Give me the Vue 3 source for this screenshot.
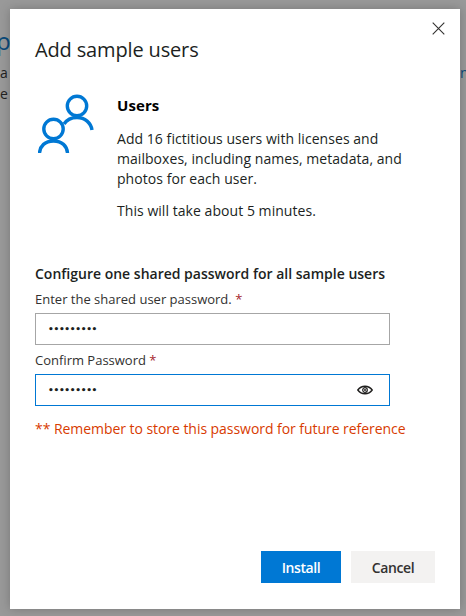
<script setup>
// Поля пароля
const mask = '•••••••••'
</script>

<template>
  <div class="page">
    <!-- Страница за затемнением -->
    <div class="behind">
      <div class="behind-title">p</div>
      <div class="behind-line">a</div>
      <div class="behind-line">e</div>
      <div class="behind-right">n</div>
    </div>

    <div class="dialog">
      <button class="close" aria-label="Close">
        <svg width="13" height="13" viewBox="0 0 13 13">
          <path d="M.7.7l11.6 11.6M12.3.7L.7 12.3" fill="none" stroke="#323130" stroke-width="1.1" />
        </svg>
      </button>

      <h1 class="title">Add sample users</h1>

      <div class="pack">
        <svg class="pack-icon" width="58" height="60" viewBox="0 0 58 60">
          <g fill="none" stroke="#0078d4" stroke-width="3.4">
            <circle cx="39" cy="13" r="9.700" />
            <path d="M26 31c3-4.500 7-6.500 13-6.500 8 0 14 5.500 15 12.500" />
            <circle cx="15.500" cy="36" r="9.700" />
            <path d="M1.500 60c.5-7 5.500-12 14-12s13.500 5 14 12" />
          </g>
        </svg>
        <div class="pack-text">
          <h2>Users</h2>
          <p>Add 16 fictitious users with licenses and mailboxes, including names, metadata, and photos for each user.</p>
          <p class="time">This will take about 5 minutes.</p>
        </div>
      </div>

      <h3 class="section">Configure one shared password for all sample users</h3>

      <label class="label">Enter the shared user password. <span class="star">*</span></label>
      <div class="field">{{ mask }}</div>

      <label class="label second">Confirm Password <span class="star">*</span></label>
      <div class="field focused">
        {{ mask }}
        <svg class="eye" width="16" height="12" viewBox="0 0 16 12">
          <path d="M.8 6C2.500 3.600 5 2.200 8 2.200s5.500 1.400 7.200 3.800C13.500 8.400 11 9.800 8 9.800S2.500 8.400.8 6z" fill="none" stroke="#201f1e" stroke-width="1.400" />
          <circle cx="8" cy="6" r="2.300" fill="none" stroke="#201f1e" stroke-width="1.200" />
          <circle cx="8" cy="6" r="1" fill="#201f1e" />
        </svg>
      </div>

      <p class="warning">** Remember to store this password for future reference</p>

      <div class="actions">
        <button class="btn primary">Install</button>
        <button class="btn">Cancel</button>
      </div>
    </div>
  </div>
</template>

<style>
html, body {
  margin: 0;
  background: #999;
}
</style>

<style scoped>
.page {
  position: relative;
  width: 466px;
  height: 616px;
  overflow: hidden;
  background: #999;
  font-family: "Open Sans", "Noto Sans", sans-serif;
  color: #201f1e;
}
.behind {
  position: absolute;
  inset: 0;
  color: #222;
  font-size: 14px;
}
.behind-title {
  position: absolute;
  left: -4px;
  top: 24px;
  font-size: 24px;
  color: #0a4a7a;
}
.behind-line {
  position: absolute;
  left: 0;
}
.behind-line:nth-child(2) { top: 63px; }
.behind-line:nth-child(3) { top: 84px; }
.behind-right {
  position: absolute;
  left: 460px;
  top: 63px;
  color: #0a4a7a;
}
.dialog {
  position: absolute;
  left: 10px;
  top: 9px;
  width: 450px;
  height: 600px;
  box-sizing: border-box;
  padding: 26px 25px 0;
  background: #fff;
  box-shadow: 0 0 10px rgba(0, 0, 0, 0.22);
  display: flex;
  flex-direction: column;
}
.close {
  position: absolute;
  right: 15px;
  top: 13px;
  width: 13px;
  height: 13px;
  padding: 0;
  border: 0;
  background: none;
  display: flex;
}
.title {
  margin: 0;
  font-size: 20px;
  font-weight: 400;
  line-height: 30px;
  letter-spacing: -0.15px;
}
.pack {
  display: flex;
  margin-top: 29px;
}
.pack-icon {
  flex: none;
  margin: -1px 21px 0 3px;
}
.pack-text h2 {
  margin: 0;
  font-size: 15px;
  font-weight: 700;
  line-height: 22px;
  color: #000;
  letter-spacing: 0.1px;
}
.pack-text p {
  margin: 13px 0 0;
  width: 295px;
  font-size: 14px;
  line-height: 20px;
  letter-spacing: 0.05px;
}
.pack-text .time {
  margin-top: 12px;
}
.section {
  margin: 43px 0 0;
  font-size: 14px;
  font-weight: 600;
  line-height: 20px;
}
.label {
  display: block;
  margin-top: 5px;
  font-size: 13px;
  line-height: 20px;
  color: #323130;
}
.label.second {
  margin-top: 5px;
}
.star {
  color: #a4262c;
}
.field {
  box-sizing: border-box;
  width: 355px;
  height: 32px;
  margin-top: 4px;
  padding: 0 12px;
  display: flex;
  align-items: center;
  justify-content: space-between;
  border: 1px solid #a6a6a6;
  font-family: "DejaVu Sans", sans-serif;
  font-size: 9px;
  font-weight: 700;
  letter-spacing: -0.3px;
}
.focused {
  border-color: #0078d4;
}
.eye {
  margin-right: 4px;
}
.warning {
  margin: 13px 0 0;
  font-size: 14px;
  line-height: 20px;
  letter-spacing: -0.05px;
  color: #d83b01;
}
.actions {
  margin-top: auto;
  margin-bottom: 26px;
  display: flex;
  justify-content: flex-end;
  gap: 10px;
}
.btn {
  height: 32px;
  width: 84px;
  border: 0;
  padding: 0;
  background: #f3f2f1;
  color: #323130;
  font-family: inherit;
  font-size: 14px;
  font-weight: 600;
  letter-spacing: -0.4px;
}
.primary {
  width: 80px;
  background: #0078d4;
  color: #fff;
}
</style>
